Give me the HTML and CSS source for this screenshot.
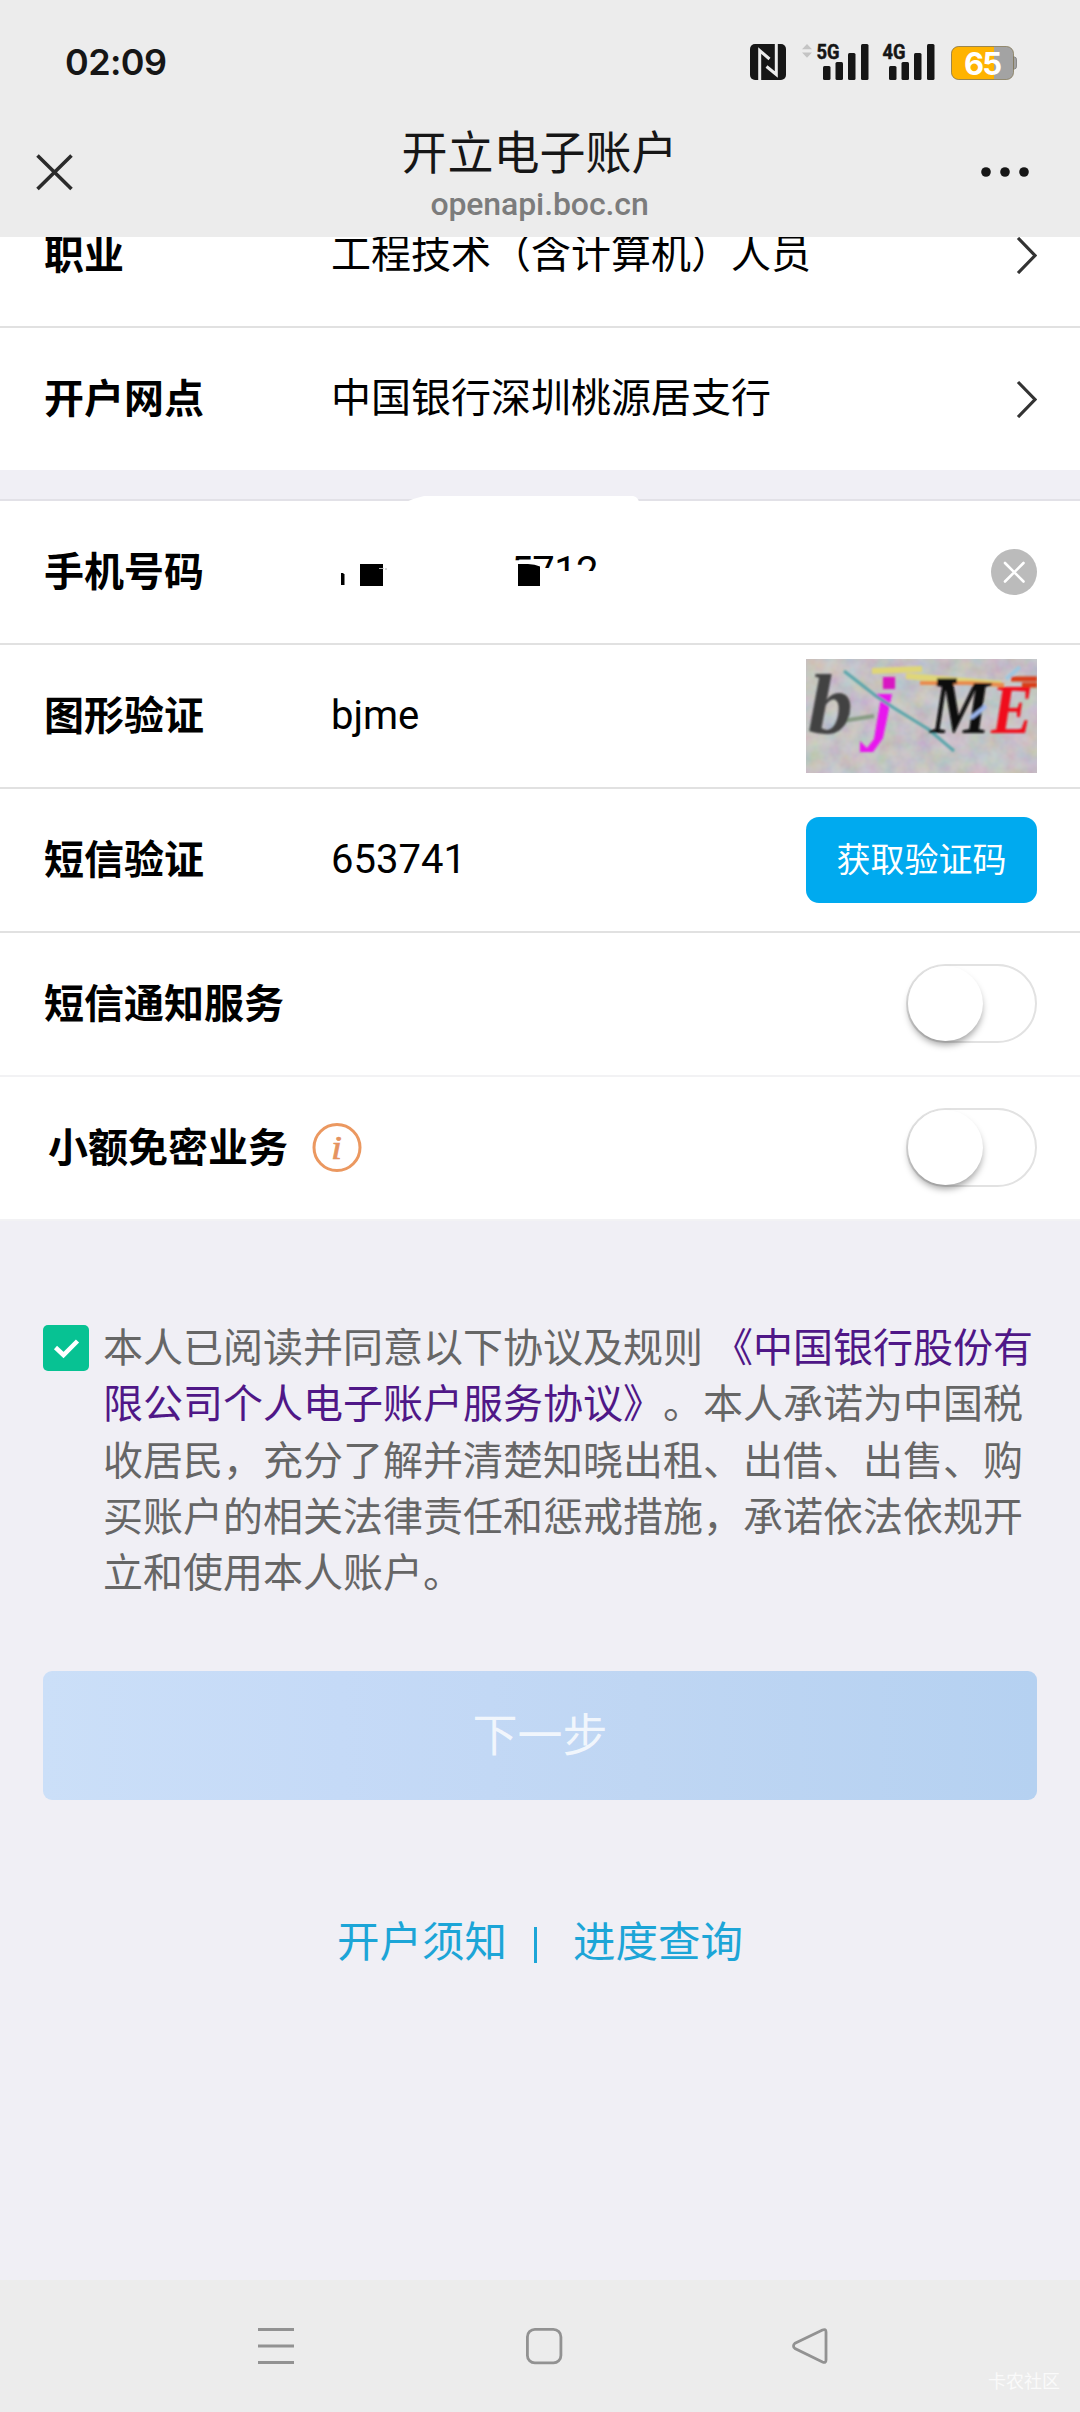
FILE: index.html
```html
<!DOCTYPE html>
<html lang="zh-CN">
<head>
<meta charset="utf-8">
<title>开立电子账户</title>
<link rel="stylesheet" href="styles.css">
</head>
<body>
<div class="screen">
  <header class="header">
    <div class="status">
      <span class="clock">02:09</span>
      <svg class="status-icons" viewBox="748 40 272 44" width="272" height="44">
        <rect x="750" y="44" width="36" height="36" rx="5" fill="#161616"/>
        <path d="M759.7 81V50.5L769.5 59M776.3 43V74.5L766.5 66.5" fill="none" stroke="#ececec" stroke-width="3"/>
        <path d="M802 49.2l5-5.2 5 5.2zM802 52.6h10l-5 5.2z" fill="#c4c4c4"/>
        <text x="816.5" y="58.6" class="net" textLength="23" lengthAdjust="spacingAndGlyphs">5G</text>
        <g fill="#161616">
          <rect x="823" y="66" width="7.5" height="14" rx="1.5"/><rect x="835.5" y="62" width="7.5" height="18" rx="1.5"/><rect x="848" y="53" width="7.5" height="27" rx="1.5"/><rect x="861" y="44" width="7.5" height="36" rx="1.5"/>
          <rect x="889" y="66" width="7.5" height="14" rx="1.5"/><rect x="901.5" y="62" width="7.5" height="18" rx="1.5"/><rect x="914" y="53" width="7.5" height="27" rx="1.5"/><rect x="927" y="44" width="7.5" height="36" rx="1.5"/>
        </g>
        <text x="882.5" y="58.6" class="net" textLength="23" lengthAdjust="spacingAndGlyphs">4G</text>
        <path d="M1013 57h1.500q2 0 2 3v6q0 3-2 3h-1.500z" fill="#a3a3a3" stroke="#898989"/>
        <rect x="951.500" y="46.500" width="62" height="33" rx="7" fill="#a3a3a3"/>
        <path d="M994 46.500H958.500a7 7 0 0 0-7 7v19a7 7 0 0 0 7 7H994z" fill="#ffb300"/>
        <rect x="951.500" y="46.500" width="62" height="33" rx="7" fill="none" stroke="#76683f" stroke-opacity=".65"/>
        <text x="964" y="74.700" class="battery" textLength="38">65</text>
      </svg>
    </div>
    <div class="titlebar">
      <svg class="close" viewBox="0 0 40 40" width="40" height="40"><path d="M2.500 3.500L36.500 37M36.500 3.500L2.500 37" stroke="#2b2b2b" stroke-width="3.600"/></svg>
      <div class="titles">
        <h1>开立电子账户</h1>
        <p>openapi.boc.cn</p>
      </div>
      <svg class="more" viewBox="0 0 48 10" width="48" height="10" fill="#161616"><circle cx="5" cy="5" r="4.800"/><circle cx="24" cy="5" r="4.800"/><circle cx="43" cy="5" r="4.800"/></svg>
    </div>
  </header>

  <main>
    <section class="group">
      <div class="row row-cut"><div class="row-in">
        <span class="label">职业</span><span class="value">工程技术（含计算机）人员</span>
        <svg class="chevron" viewBox="0 0 22 38" width="22" height="38"><path d="M3 2L20 19.500 3 37"/></svg>
      </div></div>
      <div class="row last"><div class="row-in">
        <span class="label">开户网点</span><span class="value">中国银行深圳桃源居支行</span>
        <svg class="chevron" viewBox="0 0 22 38" width="22" height="38"><path d="M3 2L20 19.500 3 37"/></svg>
      </div></div>
    </section>

    <section class="group second">
      <div class="row"><div class="row-in">
        <span class="label">手机号码</span>
        <svg class="masked" viewBox="331 501 320 142" width="320" height="142">
          <defs><clipPath id="tops"><path d="M510 550H640V571H553V568H540L531 562V560.300H510z"/></clipPath></defs>
          <path d="M406 502q9-4 18-6H633q5 1 6 6z" fill="#fff"/>
          <path d="M341 573h2l1.500 1.500V585H341z"/>
          <rect x="360" y="564" width="23" height="22"/>
          <path d="M379 568.500h4.500M386 568v2" stroke="#aaa"/>
          <text x="510.500" y="584.600" class="digits" clip-path="url(#tops)" textLength="88">5712</text>
          <path d="M518 564h10q7 0 12 2.500V586H518z"/>
        </svg>
        <svg class="end" viewBox="0 0 46 46" width="46" height="46"><circle cx="23" cy="23" r="23" fill="#bbb"/><path d="M14 14l18.500 18.500M32.500 14L14 32.500" stroke="#fff" stroke-width="2.600" stroke-linecap="round"/></svg>
      </div></div>
      <div class="row"><div class="row-in">
        <span class="label">图形验证</span><span class="value">bjme</span>
        <svg class="end" viewBox="0 0 231 114" width="231" height="114">
          <defs>
            <filter id="noise" x="0" y="0" width="100%" height="100%"><feTurbulence type="fractalNoise" baseFrequency=".055" numOctaves="3" seed="8"/><feColorMatrix values="1 0 0 0 .15  0 1 0 0 .15  0 0 1 0 .16  0 0 0 0 .28"/></filter>
            <filter id="soft"><feGaussianBlur stdDeviation=".8"/></filter>
            <clipPath id="frame"><rect width="231" height="114"/></clipPath>
          </defs>
          <rect width="231" height="114" fill="#c0bcbf"/>
          <rect width="231" height="114" filter="url(#noise)"/>
          <g filter="url(#soft)" fill="none" clip-path="url(#frame)">
            <path d="M66 12l50-2M100 17l95 8" stroke="#dfd678" stroke-width="6"/>
            <path d="M114 24h50l34 2" stroke="#e98a4d" stroke-width="4"/>
            <path d="M205 20h26M216 26h15" stroke="#d93c18" stroke-width="5"/>
            <path d="M36 62l32-5" stroke="#879b83" stroke-width="4"/>
            <path d="M200 20l14-12" stroke="#9ec6df" stroke-width="4"/>
            <text x="2" y="74" class="cap-b" textLength="45" lengthAdjust="spacingAndGlyphs">b</text>
            <g fill="#e815ee"><rect x="77" y="18" width="12" height="12" fill="#d914c2"/><path d="M70 35H86L77 79 67 93H54V82L61 89 68 80 75 39H70z"/></g>
            <path d="M38 12l32 25 18 12 34 21 26 22" stroke="#58a4aa" stroke-width="3"/>
            <text x="124" y="74" class="cap-m" textLength="60" lengthAdjust="spacingAndGlyphs">M</text>
            <path d="M131 22h20" stroke="#111" stroke-width="5"/>
            <text x="185" y="74" class="cap-e" textLength="42" lengthAdjust="spacingAndGlyphs">E</text>
            <path d="M165 59l15-12" stroke="#9db7ef" stroke-width="4"/>
          </g>
        </svg>
      </div></div>
      <div class="row"><div class="row-in">
        <span class="label">短信验证</span><span class="value">653741</span>
        <button class="code end" type="button">获取验证码</button>
      </div></div>
      <div class="row light"><div class="row-in">
        <span class="label wide">短信通知服务</span><span class="toggle end"></span>
      </div></div>
      <div class="row light"><div class="row-in">
        <span class="label wide inset">小额免密业务</span>
        <svg class="info" viewBox="0 0 50 50" width="50" height="50"><circle cx="25" cy="24.500" r="23" fill="none" stroke="#eb9860" stroke-width="3"/><text x="19" y="35.500" textLength="11" lengthAdjust="spacingAndGlyphs">i</text></svg>
        <span class="toggle end"></span>
      </div></div>
    </section>

    <div class="agree">
      <svg class="check" viewBox="0 0 46 46" width="46" height="46"><rect width="46" height="46" rx="5" fill="#07c293"/><path d="M12.500 22.500l8 7.500L34.500 16" fill="none" stroke="#fff" stroke-width="4.500"/></svg>
      <p>本人已阅读并同意以下协议及规则 <a>《中国银行股份有<br>限公司个人电子账户服务协议》</a>。本人承诺为中国税<br>收居民，充分了解并清楚知晓出租、出借、出售、购<br>买账户的相关法律责任和惩戒措施，承诺依法依规开<br>立和使用本人账户。</p>
    </div>

    <button class="next" type="button">下一步</button>

    <div class="links"><a>开户须知</a><i></i><a>进度查询</a></div>
  </main>

  <footer class="nav">
    <svg class="nav-icons" viewBox="258 2326 572 40" width="572" height="40" fill="none" stroke="#929292" stroke-width="2.800">
      <path d="M258 2329.500h36M258 2346h36M258 2362.500h36"/>
      <rect x="527.400" y="2329.400" width="33.500" height="33.500" rx="7.500"/>
      <path d="M795 2343.300L822.500 2330q3.500-1.500 3.500 2v28q0 3.500-3.500 2L795 2348.500q-3-2.600 0-5.200z"/>
    </svg>
    <span class="watermark">卡农社区</span>
  </footer>
</div>
</body>
</html>
```
FILE: styles.css
```css
* { box-sizing: border-box; margin: 0; padding: 0; }

body {
  font-family: Roboto, "Noto Sans CJK SC", sans-serif;
  color: #000;
  background: #f0eff5;
  text-spacing-trim: space-all;
}

svg { display: block; flex: none; }

.screen {
  width: 1080px;
  height: 2412px;
  display: flex;
  flex-direction: column;
  overflow: hidden;
}

.header { height: 237px; background: #ececec; }

.status {
  height: 124px;
  padding: 0 60px 0 65px;
  display: flex;
  align-items: center;
  justify-content: space-between;
}
.clock { font: 600 36px/44px Inter, sans-serif; color: #161616; letter-spacing: -.6px; }
.net { font: 700 21px Roboto, sans-serif; fill: #161616; stroke: #161616; stroke-width: .5px; }
.battery { font: 700 31px Inter, sans-serif; fill: #fff; }

.titlebar {
  height: 113px;
  padding: 0 51px 0 35px;
  display: grid;
  grid-template-columns: 60px 1fr 60px;
}
.close { margin-top: 28px; }
.more { margin-top: 43px; justify-self: end; }
.titles { text-align: center; padding-left: 15px; white-space: nowrap; }
.titles h1 { font-size: 46px; line-height: 56px; font-weight: 400; color: #161616; margin-top: 1px; }
.titles p { font-size: 32px; line-height: 36px; margin-top: 5px; color: #7c7c7c; font-weight: 500; letter-spacing: -.1px; }

.group { background: #fff; }
.second { margin-top: 29px; border-top: 2px solid #e2e1e7; }
.row {
  height: 144px;
  border-bottom: 2px solid #e1e1e1;
  display: flex;
  align-items: flex-end;
}
.row-cut { height: 91px; overflow: hidden; }
.row.last { height: 142px; border-bottom: 0; }
.row.light { border-color: #f2f2f4; }
.row-in {
  flex: 1;
  height: 142px;
  padding: 0 43px;
  display: flex;
  align-items: center;
}
.label {
  width: 288px;
  padding: 1px 0 0 1px;
  font-size: 40px;
  line-height: 60px;
  font-weight: 700;
  white-space: nowrap;
}
.label.wide { width: auto; }
.label.inset { padding-left: 5px; }
.value { font-size: 40px; line-height: 60px; white-space: nowrap; }
.chevron { margin-left: auto; fill: none; stroke: #333; stroke-width: 3.200; }
.end { margin-left: auto; }
.masked { overflow: visible; }
.digits { font: 400 40px Roboto, sans-serif; }

.cap-b, .cap-m, .cap-e { font-family: "Liberation Serif", serif; font-weight: 700; font-style: italic; }
.cap-b { font-size: 84px; fill: #424242; }
.cap-m { font-size: 76px; fill: #080808; }
.cap-e { font-size: 70px; fill: #f0111c; }

.code {
  width: 231px;
  height: 86px;
  border: 0;
  border-radius: 13px;
  background: #00aaef;
  color: #fff;
  font: 400 34px/50px Roboto, "Noto Sans CJK SC", sans-serif;
}

.toggle {
  width: 131px;
  height: 79px;
  margin-bottom: 2px;
  border: 2px solid #e2e2e2;
  border-radius: 40px;
  display: flex;
}
.toggle::before {
  content: "";
  width: 75px;
  height: 75px;
  border-radius: 50%;
  background: #fff;
  box-shadow: 0 5px 7px -1px rgba(0, 0, 0, .36);
}

.info { margin-left: 24px; }
.info text { font: italic 400 34px "Liberation Serif", serif; fill: #e5935f; stroke: #e5935f; stroke-width: .6px; }

.agree { display: flex; padding: 104px 0 0 43px; }
.check { margin: 0 14px 0 0; }
.agree p {
  font-size: 40px;
  line-height: 56.300px;
  color: #666;
  white-space: nowrap;
  margin-top: -4px;
}
.agree a { color: #4f1787; }

.next {
  display: block;
  width: 994px;
  height: 129px;
  margin: 69px 43px 0;
  padding-top: 3px;
  border: 0;
  border-radius: 9px;
  background: linear-gradient(90deg, #cbdff8, #c5daf7 30%, #bfd6f3 60%, #b5d1f1);
  color: rgba(255, 255, 255, .78);
  font: 400 45px/66px Roboto, "Noto Sans CJK SC", sans-serif;
}

.links {
  display: flex;
  align-items: center;
  justify-content: center;
  margin-top: 112px;
  font-size: 42.500px;
  line-height: 62px;
  color: #1ca5d7;
}
.links i { width: 3px; height: 36px; margin: 4px 36px 0 27px; background: #1ca5d7; }

.nav {
  margin-top: auto;
  height: 132px;
  background: #ececec;
  display: flex;
  padding: 46px 0 0 258px;
}
.watermark {
  margin: 43px 0 0 158px;
  font-size: 18px;
  line-height: 26px;
  color: #fafafa;
}
```
